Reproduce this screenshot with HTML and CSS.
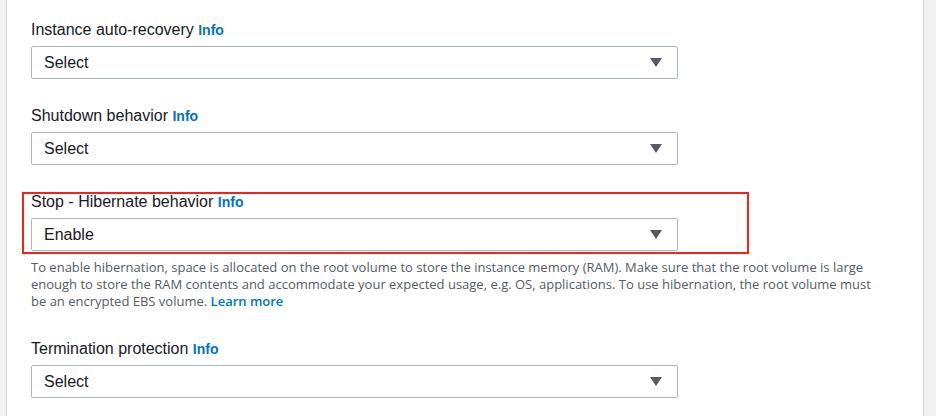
FILE: index.html
```html
<!DOCTYPE html>
<html>
<head>
<meta charset="utf-8">
<link rel="stylesheet" href="styles.css">
</head>
<body>
<div class="page">
  <div class="panel">
    <div class="field">
      <div class="label">Instance auto-recovery <a class="info">Info</a></div>
      <div class="select"><span>Select</span><span class="caret"></span></div>
    </div>
    <div class="field">
      <div class="label">Shutdown behavior <a class="info">Info</a></div>
      <div class="select"><span>Select</span><span class="caret"></span></div>
    </div>
    <div class="field highlighted">
      <div class="label">Stop - Hibernate behavior <a class="info">Info</a></div>
      <div class="select"><span>Enable</span><span class="caret"></span></div>
      <p class="help">To enable hibernation, space is allocated on the root volume to store the instance memory (RAM). Make sure that the root volume is large enough to store the RAM contents and accommodate your expected usage, e.g. OS, applications. To use hibernation, the root volume must be an encrypted EBS volume. <a class="link">Learn more</a></p>
    </div>
    <div class="field">
      <div class="label">Termination protection <a class="info">Info</a></div>
      <div class="select"><span>Select</span><span class="caret"></span></div>
    </div>
  </div>
</div>
</body>
</html>
```
FILE: styles.css
```css
html, body {
  margin: 0;
  padding: 0;
  background: #f2f3f3;
  font-family: "Liberation Sans", Arial, sans-serif;
  color: #16191f;
}
.page {
  padding: 0 12px 0 6px;
  height: 416px;
  overflow: hidden;
}
.panel {
  background: #ffffff;
  border-left: 1px solid #d5dbdb;
  border-right: 1px solid #d5dbdb;
  padding: 20px 24px 0 24px;
  height: 100%;
  box-sizing: border-box;
}
.field {
  width: 647px;
  margin-bottom: 27px;
}
.highlighted {
  position: relative;
  margin-bottom: 29px;
}
.highlighted::after {
  content: "";
  position: absolute;
  left: -9px;
  top: 0;
  width: 723px;
  height: 58px;
  border: 2px solid #f3221a;
  pointer-events: none;
}
.label {
  font-size: 16px;
  line-height: 20px;
  margin-bottom: 6px;
  white-space: nowrap;
}
.info {
  font-size: 14px;
  line-height: 1;
  font-weight: bold;
  color: #0073bb;
}
.select {
  height: 33px;
  box-sizing: border-box;
  border: 1px solid #aab7b8;
  border-radius: 2px;
  display: flex;
  align-items: center;
  justify-content: space-between;
  padding: 0 15px 0 12px;
  font-size: 16px;
  color: #16191f;
}
.caret {
  width: 0;
  height: 0;
  border-left: 6px solid transparent;
  border-right: 6px solid transparent;
  border-top: 9px solid #545b64;
}
.help {
  width: 858px;
  margin: 8px 0 0 0;
  font-family: "Open Sans", "Liberation Sans", sans-serif;
  font-size: 13px;
  line-height: 17px;
  color: #545b64;
}
.link {
  color: #0073bb;
  font-weight: 600;
}
```
